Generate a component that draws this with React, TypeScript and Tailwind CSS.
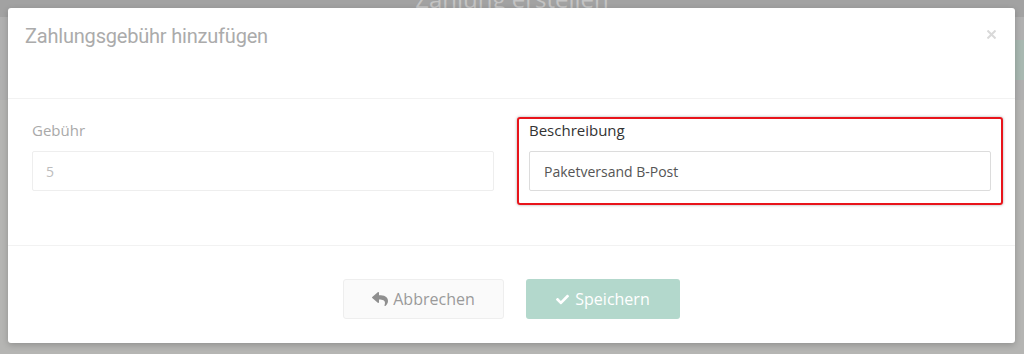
import React from 'react';
import { FaReply, FaCheck } from 'react-icons/fa';

const body = { fontFamily: '"Open Sans", "Liberation Sans", sans-serif' };

function Field({ label, value, active }: { label: string; value: string; active?: boolean }) {
  return (
    <div
      className={
        active
          ? 'border-2 border-[#e8141b] rounded-[3px] px-[10px] pt-[1px] pb-[12px] shadow-[0_0_3px_rgba(0,0,0,0.35)]'
          : 'border-2 border-transparent px-[10px] pt-[1px] pb-[12px]'
      }
    >
      <label className={'block text-[15px] leading-[21px] mb-[10px] ' + (active ? 'text-[#333]' : 'text-[#a9a9a9]')}>
        {label}
      </label>
      <div
        className={
          'h-[40px] flex items-center border rounded-[2px] text-[14px] ' +
          (active ? 'border-[#dcdcdc] px-[14px] text-[#555]' : 'border-[#eeeeee] px-[13px] text-[#bdbdbd]')
        }
      >
        {value}
      </div>
    </div>
  );
}

export default function App() {
  return (
    <div className="relative h-[354px] w-full overflow-hidden bg-[#b5b5b3]" style={body}>
      {/* page behind the overlay */}
      <div className="h-[17px] bg-[#a2a2a2] flex justify-center overflow-hidden">
        <span className="text-[24px] leading-none -mt-[13px] text-[#c4c4c4]">Zahlung erstellen</span>
      </div>
      <div className="h-[83px] bg-[#b0b0b0] pt-[44px] pl-0 text-[20px] text-[#9c9c9c] leading-none">
        <span className="-ml-[9px]">c</span>
      </div>
      <div className="absolute right-0 top-[40px] h-[40px] w-[10px] bg-[#a8b8b1]" />

      {/* modal */}
      <div className="absolute left-[8px] top-[8px] w-[1007px] h-[335px] bg-white rounded-[3px] shadow-[0_2px_6px_rgba(0,0,0,0.2)] flex flex-col">
        <div className="h-[91px] flex justify-between items-start pl-[17px] pr-[19px] pt-[14px] border-b border-[#f2f2f2]">
          <h3 className="text-[20px] leading-[28px] text-[#ababab] tracking-[-0.2px]" style={{ fontFamily: 'Roboto, "Liberation Sans", sans-serif' }}>
            Zahlungsgebühr hinzufügen
          </h3>
          <svg width="9" height="9" viewBox="0 0 9 9" className="mt-[8px]">
            <path d="M0.5 0.5 L8.5 8.5 M8.5 0.5 L0.5 8.5" stroke="#d9d9d9" strokeWidth="2" />
          </svg>
        </div>

        <div className="h-[147px] border-b border-[#f2f2f2] px-[12px] pt-[18px] grid grid-cols-2 gap-[11px] items-start">
          <Field label="Gebühr" value="5" />
          <Field label="Beschreibung" value="Paketversand B-Post" active />
        </div>

        <div className="flex justify-center gap-[22px] pt-[33px]">
          <button className="h-[40px] w-[161px] flex items-center justify-center gap-[5px] bg-[#fafafa] border border-[#eeeeee] rounded-[3px] text-[16px] text-[#9a9a9a]">
            <FaReply className="w-[16px] h-[16px] text-[#8f8f8f]" />
            Abbrechen
          </button>
          <button className="h-[40px] w-[154px] flex items-center justify-center gap-[6px] bg-[#b3d8cc] rounded-[3px] text-[16px] text-white">
            <FaCheck className="w-[13px] h-[13px]" />
            Speichern
          </button>
        </div>
      </div>
    </div>
  );
}
